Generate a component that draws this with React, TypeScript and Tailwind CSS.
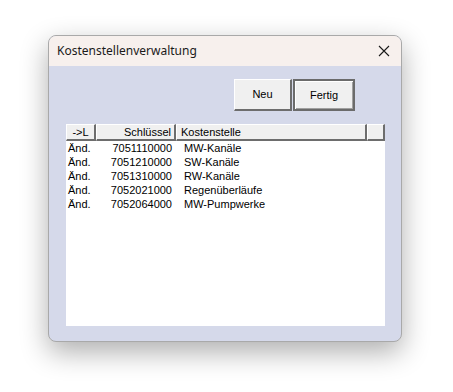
const rows = [
  { key: '7051110000', name: 'MW-Kanäle' },
  { key: '7051210000', name: 'SW-Kanäle' },
  { key: '7051310000', name: 'RW-Kanäle' },
  { key: '7052021000', name: 'Regenüberläufe' },
  { key: '7052064000', name: 'MW-Pumpwerke' },
];

const headCell =
  'h-full flex items-center border-t border-l border-t-white border-l-white border-r-2 border-b-2 border-r-[#6d6d6d] border-b-[#6d6d6d] bg-[#f0f0f0]';

export default function App() {
  return (
    <div className="w-[453px] h-[392px] bg-white overflow-hidden pt-[35px] pl-[48px] font-['Liberation_Sans',Arial,sans-serif]">
      <div className="w-[354px] h-[307px] rounded-[8px] border border-[#a9a9a9] overflow-hidden flex flex-col bg-[#d5d9ea] shadow-[0_10px_28px_rgba(0,0,0,0.32)]">
        <div className="h-[30px] shrink-0 bg-[#f7f0ed] flex items-center justify-between pl-[8px] pr-[9px]">
          <span className="text-[12px] text-[#1a1a1a] font-['Noto_Sans','Liberation_Sans',sans-serif]">Kostenstellenverwaltung</span>
          <svg width="12" height="12" viewBox="0 0 12 12" className="mr-[2px]">
            <path d="M1 1 L11 11 M11 1 L1 11" stroke="#1a1a1a" strokeWidth="1.1" fill="none" />
          </svg>
        </div>

        <div className="flex-1 flex flex-col pt-[13px] pl-[17px] pr-[16px] pb-[15px]">
          <div className="flex justify-end pr-[30px] h-[32px]">
            <button className="w-[58px] h-full bg-[#f0f0f0] border-t border-l border-t-white border-l-white border-r-2 border-b-2 border-r-[#6d6d6d] border-b-[#6d6d6d] text-[11px] text-black">
              Neu
            </button>
            <button className="ml-[1px] w-[62px] h-full bg-[#f0f0f0] border-2 border-[#6b6b6b] shadow-[inset_1px_1px_0_#ffffff,inset_-1px_-1px_0_#a0a0a0] text-[11px] text-black">
              Fertig
            </button>
          </div>

          <div className="mt-[13px] flex-1 bg-white flex flex-col text-[11px] text-black">
            <div className="h-[17px] flex shrink-0">
              <div className={`${headCell} w-[30px] justify-center`}>-&gt;L</div>
              <div className={`${headCell} w-[80px] justify-end pr-[3px]`}>Schlüssel</div>
              <div className={`${headCell} w-[191px] pl-[4px]`}>Kostenstelle</div>
              <div className={`${headCell} flex-1`}></div>
            </div>
            <div className="flex flex-col">
              {rows.map((r) => (
                <div key={r.key} className="h-[14px] flex items-center leading-none">
                  <span className="w-[29px] pl-[2px]">Änd.</span>
                  <span className="w-[77px] text-right">{r.key}</span>
                  <span className="pl-[12px]">{r.name}</span>
                </div>
              ))}
            </div>
          </div>
        </div>
      </div>
    </div>
  );
}
